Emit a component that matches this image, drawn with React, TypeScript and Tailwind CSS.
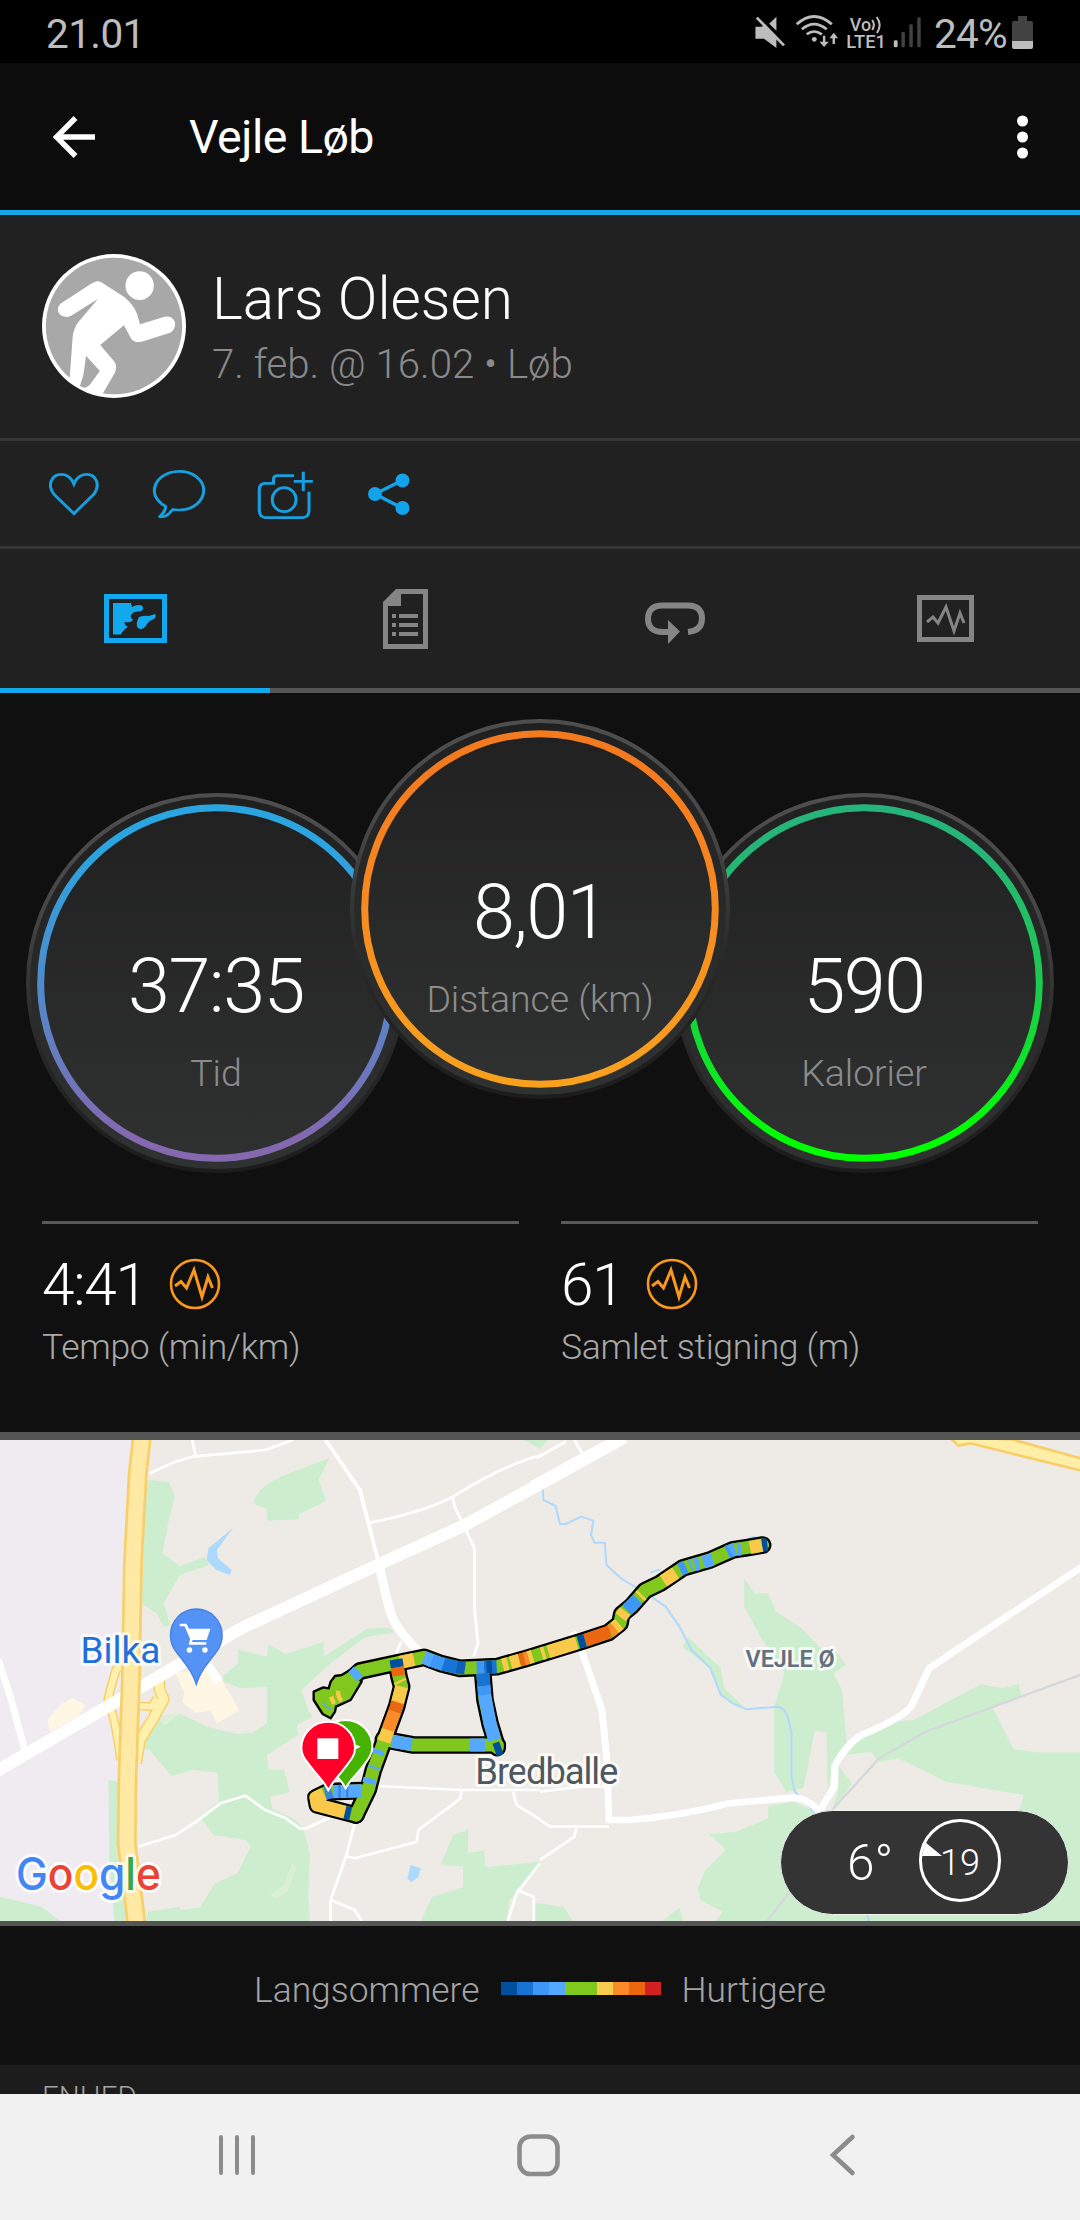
import React from "react";

const dial = {
  time: ["#2ba5e0", "#4f8bcc", "#8468b0"],
  distance: ["#f47a20", "#f68b20", "#f9a01f"],
  calories: ["#26b47a", "#1dc94f", "#00ff00"],
};

function Dial({ id, colors, value, label }: { id: string; colors: string[]; value: string; label: string }) {
  return (
    <div className="relative h-[380px] w-[380px]">
      <svg className="absolute inset-0" width="380" height="380" viewBox="0 0 380 380">
        <defs>
          <linearGradient id={id + "-ring"} x1="0" y1="0" x2="0" y2="1">
            <stop offset="0.1" stopColor={colors[0]} />
            <stop offset="0.5" stopColor={colors[1]} />
            <stop offset="0.95" stopColor={colors[2]} />
          </linearGradient>
          <linearGradient id={id + "-face"} x1="0" y1="0" x2="0" y2="1">
            <stop offset="0" stopColor="#202020" />
            <stop offset="1" stopColor="#303231" />
          </linearGradient>
          <linearGradient id={id + "-edge"} x1="0" y1="0" x2="0" y2="1">
            <stop offset="0" stopColor="#4e4e4e" />
            <stop offset="0.3" stopColor="#464646" />
            <stop offset="0.62" stopColor="#2a2a2a" />
            <stop offset="1" stopColor="#1b1c1b" />
          </linearGradient>
        </defs>
        <circle cx="190" cy="190" r="188" fill={`url(#${id}-face)`} stroke={`url(#${id}-edge)`} strokeWidth="4" />
        <circle cx="190" cy="190" r="175.3" fill="none" stroke={`url(#${id}-ring)`} strokeWidth="7" />
      </svg>
      <div className="relative flex flex-col items-center pt-[156px] leading-none">
        <span className="text-[75.5px] font-light tracking-[-1.5px] text-white">{value}</span>
        <span className="mt-[30px] text-[37.5px] font-light tracking-[-0.1px] text-[#8c8c8c]">{label}</span>
      </div>
    </div>
  );
}

function PulseBadge() {
  return (
    <svg className="mb-[2px]" width="52" height="52" viewBox="0 0 52 52" fill="none" stroke="#f8981d">
      <circle cx="26" cy="26" r="24" strokeWidth="2.6" />
      <path d="M6 28 L12 23.5 L17.5 30 L25 12 L33 39 L39 19 L43.5 30" strokeWidth="3" strokeLinejoin="miter" />
    </svg>
  );
}

function Stat({ value, label }: { value: string; label: string }) {
  return (
    <div className="flex-1 border-t-[3px] border-[#595959] pt-[33px]">
      <div className="flex h-[56px] items-center gap-[22px]">
        <span className="text-[58.5px] leading-none font-light tracking-[-1.2px] text-white">{value}</span>
        <PulseBadge />
      </div>
      <div className="mt-[17px] text-[35.5px] leading-none font-light tracking-[-0.3px] text-[#a9a9a9]">{label}</div>
    </div>
  );
}

const routeLines = [
  "M1448 135 L1400 143 L1360 149 L1290 180 L1210 203 L1140 250 L1095 272 L1055 318 L1025 343 L1020 370 L985 398 L905 424 L730 478 L650 500 L540 505 L480 490 L432 472 L345 490 L240 513 L205 545",
  "M350 490 L357 530 L365 560 L350 620 L315 715 L280 810 L265 868 L228 945",
  "M228 945 L112 915 L108 893 L145 875 L245 872",
  "M310 718 L400 735 L652 735",
  "M607 505 L615 600 L630 670 L652 743",
];

const routePaint: [string, string][] = [
  ["M1462 134 L1446 136", "#004f9e"],
  ["M1446 136 L1410 143", "#fbc94a"],
  ["M1383 147 L1372 148 M1365 148 L1342 156", "#55a8ff"],
  ["M1350 152 L1342 156", "#3d97f7"],
  ["M1298 178 L1270 187 M1258 191 L1244 194 M1236 196 L1230 198", "#55a8ff"],
  ["M1218 201 L1200 209", "#3d97f7"],
  ["M1187 219 L1150 243", "#fbc94a"],
  ["M1086 284 L1080 290", "#fbc94a"],
  ["M1073 298 L1040 330", "#3d97f7"],
  ["M1036 334 L1022 352", "#fbc94a"],
  ["M1018 372 L1004 384", "#fbc94a"],
  ["M1004 384 L990 395", "#fa8b28"],
  ["M990 395 L915 421", "#ea6610"],
  ["M915 421 L895 427", "#004f9e"],
  ["M890 429 L805 455", "#fbc94a"],
  ["M795 458 L785 461", "#fbc94a"],
  ["M758 469 L745 473", "#fbc94a"],
  ["M745 473 L733 477", "#fa8b28"],
  ["M733 477 L718 481", "#ea6610"],
  ["M718 481 L692 488", "#fbc94a"],
  ["M684 491 L668 495", "#fbc94a"],
  ["M650 500 L612 502", "#1874d4"],
  ["M636 501 L620 502", "#004f9e"],
  ["M612 502 L590 503", "#3d97f7"],
  ["M555 505 L520 500", "#0e5fb8"],
  ["M530 502 L480 490", "#1874d4"],
  ["M490 493 L450 480", "#3d97f7"],
  ["M455 482 L432 472", "#55a8ff"],
  ["M402 478 L360 487", "#fbc94a"],
  ["M236 513 L218 530", "#55a8ff"],
  ["M348 478 L352 502", "#004f9e"],
  ["M352 502 L356 527", "#ea6610"],
  ["M359 541 L362 547 M365 560 L352 610", "#fbc94a"],
  ["M353 607 L344 635", "#ea6610"],
  ["M344 635 L324 690", "#fa8b28"],
  ["M324 690 L312 725", "#fbc94a"],
  ["M295 748 L290 762 M284 800 L282 806 M270 835 L266 850", "#55a8ff"],
  ["M336 724 L395 734", "#55a8ff"],
  ["M570 735 L615 735", "#55a8ff"],
  ["M608 520 L612 558", "#1874d4"],
  ["M612 558 L614 585", "#3d97f7"],
  ["M614 585 L630 670 L644 720", "#55a8ff"],
  ["M644 750 L664 743", "#004f9e"],
  ["M245 872 L160 875", "#55a8ff"],
  ["M205 873 L198 873 M182 874 L175 874 M156 875 L135 880", "#3d83d6"],
  ["M132 882 L108 893 L112 915 L195 937", "#fbc94a"],
  ["M195 937 L212 941", "#004f9e"],
];

function MapView() {
  return (
    <svg className="block" width="1080" height="481" viewBox="0 1440 1080 481">
      <rect x="0" y="1440" width="1080" height="481" fill="#eeebe6" />
      {/* west half */}
      <g transform="translate(0 1430) scale(0.34439 0.33333)" fill="#cdedcf">
        <path fill="#efebf0" d="M0 30 H385 L360 470 L345 900 L375 1473 H0Z" />
        <path d="M425 150 L490 155 L508 200 L490 270 L472 370 L522 408 L595 380 L607 405 L522 435 L475 520 L495 585 L475 590 L455 550 L410 520Z" />
        <path d="M957 84 L925 150 L947 213 L868 253 V268 L775 272 V237 L738 222 V207 Q760 165 820 138Z" />
        <path d="M690 658 L775 680 L780 643 L830 672 L940 636 V680 L1065 596 L1130 592 L1145 607 L1060 622 L960 700 L875 780 L895 840 L907 860 L862 885 L865 915 L775 975 L780 1020 L825 1018 L840 1087 L785 1100 L790 1135 L850 1165 L880 1190 L900 1270 L895 1400 L900 1473 H425 L430 1445 L520 1430 L525 1440 L580 1432 L625 1360 L690 1330 L728 1250 L715 1230 L620 1215 L580 1160 L635 1115 L632 1028 L560 1020 L498 1038 L435 960 L405 955 L440 890 L430 870 L450 855 L480 885 L520 850 L610 893 L690 912 L735 908 L775 880 V770 L700 775 L650 755 L645 740 L692 700Z" />
        <path d="M315 1050 L342 1055 L345 1240 L365 1473 H332 L318 1290Z M0 1400 L120 1430 L175 1473 H0Z M1280 1305 L1315 1215 L1360 1200 L1358 1268 L1405 1262 L1410 1312 L1568 1295 V1310 L1500 1390 L1480 1410 L1470 1473 H1222 L1255 1400 L1345 1372 V1310Z M1520 30 H1590 L1568 56Z M1555 1420 H1568 V1473 H1550Z" />
        <path fill="#dcefd6" d="M848 1300 L862 1310 L835 1385 L800 1408 L785 1395 L825 1365Z M445 860 L515 850 L480 885Z" />
        <path fill="#fff6e4" d="M510 730 L610 705 L640 740 L695 842 L630 880 L612 843 L565 848 L530 815 L535 790Z M137 870 L175 825 L210 803 L250 825 L225 860 L145 905Z" />
        <path fill="#acdaff" d="M677 293 L630 360 L633 385 L673 420 L668 435 L628 420 L600 390 L605 355Z M1192 1305 L1222 1315 L1215 1340 L1195 1357 L1183 1345Z" />
      </g>
      {/* motorway ramps */}
      <g transform="translate(90 1640) scale(0.33333)" fill="none" strokeLinejoin="round">
        <path stroke="#f7d06c" strokeWidth="28" d="M98 75 L78 90 L62 145 L54 178 L70 230 L84 300 L92 360" />
        <path stroke="#f7d06c" strokeWidth="36" d="M207 120 L209 150 L221 178 L190 235 L150 300 L138 370" />
        <path stroke="#f7d06c" strokeWidth="26" d="M145 198 L185 200 L200 175" />
        <path stroke="#fff0ad" strokeWidth="19" d="M98 75 L78 90 L62 145 L54 178 L70 230 L84 300 L92 360" />
        <path stroke="#fff0ad" strokeWidth="27" d="M207 120 L209 150 L221 178 L190 235 L150 300 L138 370" />
        <path stroke="#fff0ad" strokeWidth="17" d="M145 198 L185 200 L200 175" />
      </g>
      <g transform="translate(0 1430) scale(0.34439 0.33333)">
        <g fill="none" stroke="#fff" strokeLinejoin="round">
          <g strokeWidth="8">
            <path d="M435 130 L510 95 L560 80 L770 60 L850 30 M558 30 L568 78" />
            <path d="M1075 278 Q1235 245 1315 200 Q1470 100 1575 75 M1315 200 L1320 230 L1378 355 V540 L1388 640 L1375 680" />
            <path d="M400 1250 L510 1215 L570 1175 L640 1120 L712 1097 L770 1140 L830 1165 L870 1195 L890 1195 L960 1162" />
            <path d="M1095 1068 L1340 1080 H1568 M1340 1082 L1337 1105 L1215 1200 L1210 1235 L1030 1285 L1005 1278 M1030 1180 L1005 1278 L960 1410 V1473 M960 1410 L1030 1440 L1050 1473" />
            <path d="M1490 1085 L1500 1125 L1568 1168 M1568 1300 L1500 1390 L1475 1473 M1500 1380 L1550 1400 V1473 M1165 635 L1150 670" />
          </g>
          <path strokeWidth="11" d="M945 30 L1045 180 L1075 300 L1100 400" />
          <path strokeWidth="26" d="M1100 400 Q1120 500 1135 550 T1225 675" />
          <path strokeWidth="20" d="M-5 690 L30 800 L72 960" />
          <path strokeWidth="36" d="M-20 1030 L345 810 L700 595 L1100 403 L1350 285 L1580 155 L1800 30" />
          <path strokeWidth="26" d="M600 700 L635 755" />
        </g>
        <g fill="none" strokeLinejoin="round">
          <path stroke="#f7d06c" strokeWidth="58" d="M412 20 L400 130 L386 400 L380 750 L370 1050 L368 1240 L396 1480" />
          <path stroke="#ffe9a4" strokeWidth="42" d="M412 20 L400 130 L386 400 L380 750 L370 1050 L368 1240 L396 1480" />
        </g>
        <path fill="#5492f5" stroke="#4681e2" strokeWidth="4" d="M570 763 C562 735 552 718 530 690 C507 661 495 646 495 615 A75 78 0 0 1 645 615 C645 646 633 661 610 690 C588 718 578 735 570 763Z" />
        <path fill="#fff" d="M522 581 H541 L549 596 H611 L600 630 H560 L556 636 L599 637 V644 H548 L552 627 L536 589 H522Z" />
        <circle cx="550" cy="660" r="8" fill="#fff" /><circle cx="595" cy="660" r="8" fill="#fff" />
      </g>
      {/* east half */}
      <g transform="translate(540 1430) scale(0.34439 0.33333)" fill="#cdedcf">
        <path d="M593 445 L622 490 H662 L685 545 L760 595 L810 650 L865 670 L888 705 L852 730 L877 780 L890 940 L850 1010 L835 1080 L832 907 L798 902 L765 1075 L715 1085 L680 1025 V830 L710 730 L640 620 L593 530Z" />
        <path d="M890 975 L930 925 L1020 875 L1085 870 L1280 763 L1345 775 L1390 762 L1397 797 L1315 835 L1375 957 L1440 967 H1568 V1473 H1490 L1390 1150 L1405 1095 L1180 1055 L1040 985 L985 997 L960 965Z" />
        <path d="M870 1010 L905 1060 L850 1140 L865 1080Z M663 1128 L735 1115 L800 1145 H1568 V1473 H510 L530 1445 L465 1410 L458 1375 L480 1320 L540 1260 L493 1213 L570 1205 L663 1165Z M355 1473 L405 1433 L415 1473Z M0 1420 L70 1432 L95 1473 H0Z M0 30 H22 L0 56Z" />
        <path d="M430 620 L525 715 L535 775 L600 838 L560 820 L525 795 L495 715 L413 650Z" />
        <g fill="none" strokeLinejoin="round">
          <path stroke="#d3d8da" strokeWidth="7" d="M1575 732 L1120 905 L985 985 L850 1138 M725 1385 L660 1473" />
          <path stroke="#b0d9fb" strokeWidth="6" d="M8 178 L10 210 L45 228 L58 282 H75 L120 260 L155 272 L148 315 L158 338 H188 L193 405 L235 445 L275 470 L330 505 L365 530 L405 590 L440 660 L495 715 L525 795 L560 820 L600 838 L690 830 Q715 835 722 870 L730 910 V1040 L740 1085 L800 1150 M950 1455 L955 1473 M320 428 L350 418 M605 325 L625 320" />
          <g stroke="#fff">
            <path strokeWidth="8" d="M-10 84 L75 35 M100 30 L125 75 M0 1085 L120 1070 H195 M0 1170 L30 1190 H200 M105 1195 L100 1220 L0 1290" />
            <path strokeWidth="36" d="M-20 170 L130 85 L245 22" />
            <path strokeWidth="20" d="M95 606 L120 660 L180 840 L195 1000 L200 1170 H260 Q400 1160 550 1120 L735 1103 Q780 1105 810 1145 L855 1070 V1010 Q890 940 935 915 Q1060 860 1080 825 L1130 715 L1310 590 L1575 410" />
          </g>
        </g>
        <path fill="#ffefa6" stroke="#f7cf6a" strokeWidth="8" d="M1190 22 L1215 47 L1250 40 L1320 58 L1580 124 V88 L1370 28Z" />
      </g>
      {/* place names */}
      <g fontFamily="Roboto" stroke="#fff" strokeOpacity="0.75" strokeWidth="6" strokeLinejoin="round" paintOrder="stroke">
        <text x="80.5" y="1662.5" fontSize="37" fill="#1f70d8" textLength="80">Bilka</text>
        <text x="475.3" y="1783.5" fontSize="36.5" fill="#4f585e" textLength="143">Bredballe</text>
        <text x="745.5" y="1666.5" fontSize="24.5" fontWeight="600" fill="#64707f" textLength="89" lengthAdjust="spacingAndGlyphs">VEJLE Ø</text>
        <text x="16" y="1889.5" fontSize="45" fontFamily="Inter" fontWeight="500" textLength="145" lengthAdjust="spacingAndGlyphs">
          <tspan fill="#4285f4">G</tspan><tspan fill="#ea4335">o</tspan><tspan fill="#fbbc05">o</tspan><tspan fill="#4285f4">g</tspan><tspan fill="#34a853">l</tspan><tspan fill="#ea4335">e</tspan>
        </text>
      </g>
      {/* pace-coloured track */}
      <g transform="translate(280 1500) scale(0.33333)" fill="none" strokeLinejoin="round">
        <g stroke="#000" strokeWidth="53" strokeLinecap="round">
          {routeLines.map((d) => <path key={d} d={d} />)}
        </g>
        <path fill="#80c81e" stroke="#000" strokeWidth="7" d="M101 575 L130 562 L146 565 L152 545 L165 528 L185 525 L210 510 L245 545 L212 600 L168 620 L165 635 L152 655 L128 642 L101 600Z" />
        <g stroke="#80c81e" strokeWidth="39" strokeLinecap="round">
          {routeLines.map((d) => <path key={d} d={d} />)}
        </g>
        <g strokeWidth="39">
          {routePaint.map(([d, c]) => <path key={d + c} d={d} stroke={c} />)}
        </g>
        <path stroke="#55a8ff" strokeWidth="4" d="M130 605 Q134 625 152 627 M622 683 Q638 672 650 684 M626 702 Q640 692 655 704" />
        <path stroke="#fbc94a" strokeWidth="13" d="M153 590 L162 612 M175 573 Q172 590 185 603" />
        <path fill="#46b300" stroke="#fff" strokeWidth="6" d="M197 866 C187 842 165 825 148 802 C128 778 117 762 117 740 A80 80 0 0 1 277 740 C277 762 266 778 246 802 C229 825 207 842 197 866Z" />
        <path fill="#fff" d="M228 734 L242 740 L228 747Z" />
        <path fill="#ff0029" stroke="#fff" strokeWidth="6" d="M145 872 C136 848 113 828 96 805 C76 779 64 768 64 744 A80 78 0 0 1 225 744 C225 768 213 779 193 805 C177 828 154 848 145 872Z" />
        <path fill="#fff" d="M112 715 H175 V777 H112Z" />
      </g>
    </svg>
  );
}

const paceScale = ["bg-[#004f9e]", "bg-[#1874d4]", "bg-[#3d97f7]", "bg-[#55a8ff]", "bg-[#80c81e]", "bg-[#80c81e]", "bg-[#f9cb4f]", "bg-[#fa8b28]", "bg-[#ea6610]", "bg-[#d32020]"];

export default function App() {
  return (
    <div className="flex h-[2220px] w-[1080px] flex-col overflow-hidden bg-[#101010] font-['Roboto',sans-serif]">
      {/* status bar */}
      <div className="flex h-[63px] items-start justify-between bg-black pr-[47px] pl-[46px] text-[#bdbdbd]">
        <span className="pt-[14px] text-[40.5px] leading-none tracking-[-0.6px]">21.01</span>
        <div className="flex items-start">
          <svg className="mt-[13px] overflow-visible" width="172" height="37" viewBox="616 39 499.5 111" preserveAspectRatio="none" fill="#bdbdbd">
            <path d="M623 80 H642 L650 72 L684 108 V144 L648 116 H623Z M663 71 L684 50 V92Z" />
            <path d="M627 53 L706 136" stroke="#bdbdbd" strokeWidth="8" />
            <g fill="none" stroke="#bdbdbd" strokeWidth="8">
              <path d="M743 73 Q793 26 845 73 M758 88 Q793 57 830 88 M772 103 Q793 86 816 103" />
            </g>
            <circle cx="794" cy="118" r="7" />
            <path d="M819 107 H826 V125 H836 L822.500 141 L809 125 H819Z M847 132 H854 V115 H863 L850.500 98 L838 115 H847Z" />
            <g fontFamily="Roboto" fontWeight="500">
              <text x="897" y="92" fontSize="53" textLength="62" lengthAdjust="spacingAndGlyphs">Vo</text>
              <text x="887" y="144" fontSize="53" textLength="115" lengthAdjust="spacingAndGlyphs">LTE1</text>
            </g>
            <path fill="none" stroke="#bdbdbd" strokeWidth="6" d="M962 60 Q972 74 962 90 M975 51 Q992 74 976 99" />
            <rect x="1025" y="121" width="11" height="21" rx="4" />
            <g fill="#424242">
              <rect x="1047" y="96" width="10" height="46" rx="4" />
              <rect x="1070" y="73" width="10" height="69" rx="4" />
              <rect x="1093" y="52" width="10" height="90" rx="4" />
            </g>
          </svg>
          <span className="mr-[5px] ml-[9px] w-[73px] pt-[14px] text-[40.5px] leading-none tracking-[-0.8px]">24%</span>
          <svg className="mt-[16px]" width="21" height="33" viewBox="0 0 21 33">
            <path fill="#424242" d="M6 0 H15 V5 H19 Q21 5 21 7 V25 H0 V7 Q0 5 2 5 H6Z" />
            <path fill="#bdbdbd" d="M0 25 H21 V31 Q21 33 19 33 H2 Q0 33 0 31Z" />
          </svg>
        </div>
      </div>

      {/* app bar */}
      <div className="flex h-[152px] items-center border-b-[5px] border-[#17a5e8] bg-[#0c0c0c] pr-[52px] pl-[53px] text-white">
        <svg width="42" height="42" viewBox="0 0 42 42" fill="none" stroke="currentColor" strokeWidth="5.400">
          <path d="M42 21 H4 M22.500 2 L3.500 21 L22.500 40" />
        </svg>
        <h1 className="ml-[94px] flex-1 pt-[2px] text-[46.500px] leading-none font-normal tracking-[-0.5px]">Vejle Løb</h1>
        <svg width="11" height="44" viewBox="0 0 11 44" fill="currentColor">
          <circle cx="5.500" cy="6" r="5.500" /><circle cx="5.500" cy="22" r="5.500" /><circle cx="5.500" cy="38" r="5.500" />
        </svg>
      </div>

      {/* athlete */}
      <div className="flex h-[226px] items-start border-b-[3px] border-[#363636] bg-[#212121] pt-[39px] pl-[42px]">
        <svg width="144" height="144" viewBox="110 101 376 432" preserveAspectRatio="none">
          <defs><clipPath id="avatar"><ellipse cx="298" cy="317" rx="181" ry="208" /></clipPath></defs>
          <ellipse cx="298" cy="317" rx="188" ry="216" fill="#fff" />
          <ellipse cx="298" cy="317" rx="178" ry="205" fill="#a8a8a8" />
          <g clipPath="url(#avatar)" fill="#fff">
            <ellipse cx="365" cy="196" rx="37" ry="43" />
            <path d="M253 183 Q262 182 275 193 L325 230 Q350 255 358 280 L366 312 L430 289 Q450 286 457 305 Q460 325 445 337 L370 364 Q352 369 343 355 L324 315 L262 374 L300 425 Q307 440 300 458 L262 533 L205 533 L225 502 L208 495 L205 533 H178 L185 430 L190 350 Q192 325 205 305 L256 236 L185 287 Q168 295 156 282 Q146 265 158 250 L240 189Z" />
            <path fill="#a8a8a8" d="M225 406 L261 452 L235 493 Q222 507 209 497 L218 465Z" />
          </g>
        </svg>
        <div className="pt-[16px] pl-[26px] leading-none font-light">
          <div className="text-[58.500px] text-white">Lars Olesen</div>
          <div className="mt-[16px] text-[40.200px] text-[#8a8a8a]">7. feb. @ 16.02 • Løb</div>
        </div>
      </div>

      {/* actions */}
      <div className="flex h-[108px] items-center border-b-[3px] border-[#363636] bg-[#212121] pl-[21px] text-[#17a0e0]">
        <div className="flex w-[105px] justify-center">
          <svg width="50" height="44" viewBox="127 754 130.6 132" preserveAspectRatio="none" fill="none" stroke="currentColor">
            <path strokeWidth="8" d="M192 879 L141 822 C120 793 134 761 160 761 C177 761 187 776 192 790 C197 776 208 761 225 761 C250 761 263 793 243 822Z" />
          </svg>
        </div>
        <div className="flex w-[105px] justify-center">
          <svg width="54" height="50" viewBox="396 745 141 150" preserveAspectRatio="none" fill="none" stroke="currentColor">
            <path strokeWidth="8" strokeLinejoin="round" d="M432 857 C415 848 402 828 402 812 C402 778 430 752 468 752 C503 752 531 778 531 808 C531 840 505 868 468 868 C459 868 455 866 450 867 L441 878 Q430 890 416 888 Q430 875 432 857Z" />
          </svg>
        </div>
        <div className="flex w-[105px] justify-center pt-[2px] pl-[3px]">
          <svg width="57" height="50" viewBox="670 749 149 150" preserveAspectRatio="none" fill="none" stroke="currentColor" strokeWidth="8">
            <path d="M767 766 H722 Q713 767 713 778 V789 H690 Q676 791 676 808 V872 Q677 890 692 892 H790 Q805 890 806 872 V814 M791 754 V812 M766 783 H816" />
            <ellipse cx="741" cy="838" rx="31" ry="36" />
          </svg>
        </div>
        <div className="flex w-[105px] justify-center">
          <svg width="42" height="42" viewBox="0 0 42 42" fill="#12a3ea">
            <circle cx="7" cy="21" r="7" /><circle cx="34.500" cy="7.500" r="7" /><circle cx="34.500" cy="35" r="7" />
            <path d="M34 7.500 L7 21 L34 35" fill="none" stroke="#12a3ea" strokeWidth="3.500" />
          </svg>
        </div>
      </div>

      {/* tabs */}
      <div className="grid h-[144px] grid-cols-4 bg-[#212121] text-[#858585]">
        <div className="flex items-center justify-center border-b-[5px] border-[#12a8ee]">
          <svg width="63" height="49" viewBox="0 0 63 49">
            <path d="M2.500 2.500 H60.500 V46.500 H2.500Z" fill="none" stroke="#12a8ee" strokeWidth="5" />
            <path fill="#12a8ee" d="M9 9 H27 L28 13 Q33 10 38 11.500 Q41 16 36 17.500 Q29 17 28 20 Q25 22 29 26 Q27 29 21 28 Q19 30 24 33 Q19 36 17 40.500 H9Z M51 20 Q53 22 50 25 Q43 28 42 32 Q38 37 34 34 Q31 30 35 23 Q41 21 45 22Z" />
          </svg>
        </div>
        <div className="flex items-center justify-center border-b-[5px] border-[#555]">
          <svg width="45" height="60" viewBox="0 0 45 60" fill="currentColor">
            <path fillRule="evenodd" d="M13 0 H45 V60 H0 V13Z M18 5 V17 H5 V55 H40 V5Z" />
            <path d="M16 25 H35 V29 H16Z M16 34 H35 V38 H16Z M16 43 H35 V47 H16Z M9 25 H13 V29 H9Z M9 34 H13 V38 H9Z M9 43 H13 V47 H9Z" />
          </svg>
        </div>
        <div className="flex items-center justify-center border-b-[5px] border-[#555] pt-[8px]">
          <svg width="60" height="42" viewBox="0 0 60 42" fill="none" stroke="currentColor" strokeWidth="6">
            <path d="M24 30 H18 C8 30 3 25 3 17 C3 8 8 3.500 17 3.500 H43 C52 3.500 57 8 57 16.500 C57 24 53 29 43 30" />
            <path fill="currentColor" stroke="none" d="M23 18 L35 29.500 L23 42Z" />
          </svg>
        </div>
        <div className="flex items-center justify-center border-b-[5px] border-[#555]">
          <svg width="57" height="47" viewBox="0 0 57 47" fill="none" stroke="currentColor">
            <path d="M2.500 2.500 H54.500 V44.500 H2.500Z" strokeWidth="5" />
            <path d="M10 27 L16 22 L21 28 L29 12 L37 36 L43 18 L47 28" strokeWidth="3" />
          </svg>
        </div>
      </div>

      {/* headline dials */}
      <div className="flex h-[528px] justify-center pt-[26px]">
        <div className="mt-[74px]"><Dial id="time" colors={dial.time} value="37:35" label="Tid" /></div>
        <div className="z-10 -mx-[56px]"><Dial id="distance" colors={dial.distance} value="8,01" label="Distance (km)" /></div>
        <div className="mt-[74px]"><Dial id="calories" colors={dial.calories} value="590" label="Kalorier" /></div>
      </div>

      <div className="flex h-[211px] gap-[42px] px-[42px]">
        <Stat value="4:41" label="Tempo (min/km)" />
        <Stat value="61" label="Samlet stigning (m)" />
      </div>

      {/* map */}
      <div className="relative border-t-[8px] border-b-[5px] border-[#555]">
        <MapView />
        <div className="absolute right-[11px] bottom-[6px] flex h-[105px] w-[289px] items-center rounded-full border border-[#f2f4f2] bg-[#343434] pl-[66px] leading-none font-light text-white">
          <span className="w-[46px] pt-[2px] text-[49.500px]">6°</span>
          <div className="relative mt-[-4px] ml-[26px] flex h-[83px] w-[82px] items-center justify-center rounded-full border-[3px] border-white text-[36px]">
            <svg className="absolute top-0 left-0" width="24" height="36" viewBox="0 0 24 36"><path fill="#fff" d="M3 20 L0 34 H20Z" /></svg>
            <span className="pt-[5px]">19</span>
          </div>
        </div>
      </div>

      {/* pace legend */}
      <div className="flex h-[139px] justify-center pt-[47px] text-[35.400px] leading-none font-light text-[#a3a3a3]">
        <span>Langsommere</span>
        <div className="mx-[21px] mt-[9px] flex h-[13px]">
          {paceScale.map((c, i) => <div key={i} className={"h-full w-[16px] " + c} />)}
        </div>
        <span>Hurtigere</span>
      </div>

      <div className="h-[29px] overflow-hidden bg-[#1c1c1c] pt-[18px] pl-[42px] text-[29.500px] leading-none font-light text-[#a3a3a3]">ENHED</div>

      {/* system navigation */}
      <div className="flex h-[126px] items-center bg-[#f1f1f1] pb-[4px] text-[#8c8c8c]">
        <svg className="ml-[217px]" width="40" height="44" viewBox="0 0 40 44" stroke="currentColor" strokeWidth="4" strokeLinecap="round">
          <path d="M4 4 V40 M20 4 V40 M36 4 V40" />
        </svg>
        <svg className="ml-[259px]" width="44" height="44" viewBox="0 0 44 44" fill="none" stroke="currentColor" strokeWidth="4.600">
          <rect x="3.500" y="3.500" width="38" height="37.500" rx="11" />
        </svg>
        <svg className="ml-[268px]" width="30" height="44" viewBox="0 0 30 44" fill="none" stroke="currentColor" strokeWidth="4.600" strokeLinecap="round">
          <path d="M24.500 4 L5 22 L24.500 40" />
        </svg>
      </div>
    </div>
  );
}
